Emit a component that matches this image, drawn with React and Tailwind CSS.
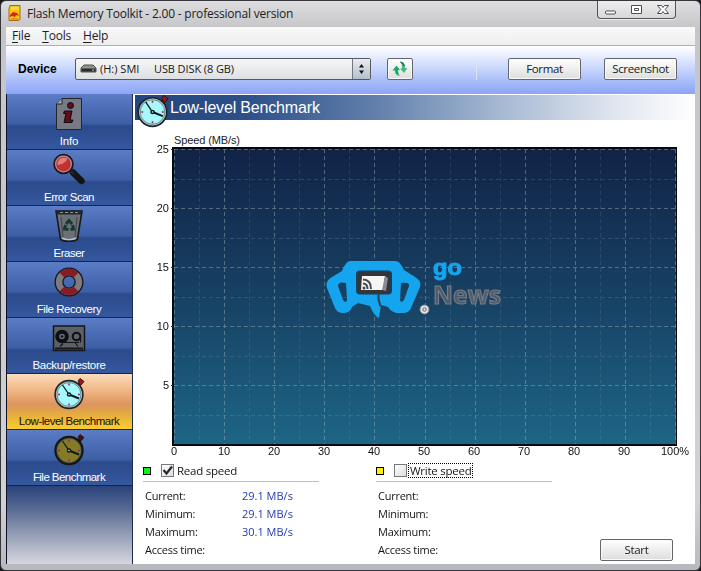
import React from "react";

const ui = "font-['Open_Sans','Noto_Sans',sans-serif]";
const arial = "font-['Liberation_Sans',Arial,sans-serif]";

function Stopwatch({ face = "#a5f8fb", rim = "#b9c3c6", line = "#17272b", crown = "#a7131d", size = 34, className = "" }) {
  return (
    <svg width={size} height={size} viewBox="0 0 34 34" className={className}>
      <path d="M25 9l3-2" stroke={line} strokeWidth="4" />
      <path d="M26 4l2-2.500 4 3-3.500 4z" fill={crown} stroke="#3d1416" strokeWidth="1" />
      <circle cx="17" cy="17.500" r="13.900" fill={rim} stroke={line} strokeWidth="1.600" />
      <circle cx="17" cy="17.500" r="11.900" fill={face} stroke="#52686c" strokeWidth=".7" />
      <path d="M17 6.500v2M17 26.500v2M6 17.500h2M26 17.500h2" stroke="#a32752" strokeWidth="1.500" />
      <path d="M17 17.500L10.500 8" stroke="#101c20" strokeWidth="1.300" />
      <path d="M17 17.500l10 4" stroke="#101c20" strokeWidth="2" />
      <circle cx="17" cy="17.500" r="2.200" fill="#101c20" />
      <circle cx="17" cy="17.500" r=".7" fill="#fff" />
    </svg>
  );
}

function InfoIcon() {
  return (
    <svg width="34" height="34" viewBox="0 0 34 34">
      <path d="M10 1.500H29.500V32.500H4.500V7z" fill="#777984" stroke="#23252d" />
      <path d="M4.500 7H10V1.500" fill="#a1a5b3" stroke="#23252d" />
      <circle cx="18.500" cy="8.500" r="3" fill="#5d101b" stroke="#15090d" />
      <path d="M12.500 14h7.500l-2 9h3l-1 2.500h-8l2-9h-2.500z" fill="#5d101b" stroke="#15090d" />
    </svg>
  );
}

function LensIcon() {
  return (
    <svg width="34" height="34" viewBox="0 0 34 34">
      <path d="M21 19.500L29.500 28" stroke="#141417" strokeWidth="6.500" strokeLinecap="round" />
      <path d="M16 15l6 6" stroke="#22222a" strokeWidth="3" />
      <circle cx="11.500" cy="11" r="9.300" fill="#c0312f" stroke="#24161d" strokeWidth="2" />
      <circle cx="11.500" cy="11" r="7.900" fill="none" stroke="#a9929a" strokeWidth="1.200" />
      <path d="M5.500 12c-.5-6 5-8.500 10-6.500-2 4-5 6-10 6.500z" fill="#e98a85" opacity=".85" />
    </svg>
  );
}

function BinIcon() {
  return (
    <svg width="34" height="34" viewBox="0 0 34 34">
      <path d="M4 2h26l-4.500 28c-2 3-15 3-17 0z" fill="#6b7078" stroke="#17191d" strokeWidth="1.600" />
      <path d="M4 1.500h26l-1 4H5z" fill="#24272d" />
      <path d="M8 3.500h18" stroke="#8c9098" strokeDasharray="3 2" />
      <path d="M9 8l2 21M25 8l-2 21" stroke="#454b55" strokeWidth="1.200" />
      <path d="M14 15l3-3.500 3 3.500M20.500 16l1 4-3 .5M13.500 16l-1 4 4 .5" fill="none" stroke="#173a2e" strokeWidth="3" />
      <path d="M10 29c4 2 10 2 14 0" fill="none" stroke="#bdc2ca" strokeWidth="1.500" />
    </svg>
  );
}

function RingIcon() {
  return (
    <svg width="34" height="34" viewBox="0 0 34 34">
      <circle cx="17" cy="17" r="10" fill="none" stroke="#15161c" strokeWidth="9" />
      <circle cx="17" cy="17" r="10" fill="none" stroke="#7d7b80" strokeWidth="6.400" />
      <path d="M9.930 9.930A10 10 0 0 1 24.070 9.930M24.070 24.070A10 10 0 0 1 9.930 24.070" fill="none" stroke="#871c24" strokeWidth="6.400" />
    </svg>
  );
}

function TapeIcon() {
  return (
    <svg width="34" height="34" viewBox="0 0 34 34">
      <path d="M1.500 5h31v24.500h-31z" fill="#5d6066" stroke="#15171c" strokeWidth="1.500" />
      <path d="M3 27.500h28" stroke="#15171c" strokeWidth="2" />
      <circle cx="10" cy="15.500" r="4.800" fill="#65717d" stroke="#0d0f12" strokeWidth="4" />
      <circle cx="24.500" cy="15.500" r="3.800" fill="#5b6269" stroke="#0d0f12" strokeWidth="2" />
      <path d="M10 21.500h17M28.500 16.500v5M8 25.500l3-3M23 21.500l3 4" fill="none" stroke="#111317" strokeWidth="1.200" />
      <circle cx="10" cy="15.500" r="1.300" fill="#0d0f12" />
    </svg>
  );
}

const items = [
  ["Info", <InfoIcon />, "tracking-[-0.2px]"],
  ["Error Scan", <LensIcon />, "tracking-[-0.5px]"],
  ["Eraser", <BinIcon />, "tracking-[-0.5px]"],
  ["File Recovery", <RingIcon />, "tracking-[-0.45px]"],
  ["Backup/restore", <TapeIcon />, "tracking-[-0.3px]"],
  ["Low-level Benchmark", <Stopwatch />, "tracking-[-0.5px]"],
  ["File Benchmark", <Stopwatch face="#857a25" rim="#29291e" line="#15150f" crown="#35151a" />, "tracking-[-0.55px]"],
];

function Sidebar() {
  return (
    <nav className="flex w-[127px] shrink-0 flex-col border-x border-l-[#0c1222] border-r-[#1d2b4d]">
      {items.map(([name, icon, tracking], i) => (
        <div
          key={name}
          className={`flex h-14 shrink-0 flex-col items-center border-b pr-px pt-[3px] text-[11.5px] leading-[14px] ${arial} ${tracking} ${
            i === 5
              ? "border-[#2c2a22] bg-[linear-gradient(#fbdcbb_0%,#eeb07c_35%,#dc9560_55%,#dfa04c_65%,#eab53a_80%,#fccd30_100%)] text-[#15120a]"
              : "border-[#172348] bg-[linear-gradient(#5a7dc6_0%,#4869b1_35%,#3d5fa6_54%,#2c4b8d_58%,#2f5094_78%,#36589f_100%)] text-white"
          }`}
        >
          {icon}
          <span className="mt-[3px] whitespace-nowrap">{name}</span>
        </div>
      ))}
      <div className="grow bg-[linear-gradient(#2a437a,#596b94_30%,#9aa2b9_65%,#d5d7df)]" />
    </nav>
  );
}

function WatchLogo() {
  return (
    <g>
      <path
        fill="#15a5ef"
        fillRule="evenodd"
        d="M350 261H395Q400 261 404 270L415 277Q422 281 420 287L411 308Q409 313 403 313H396Q391 312 388 307Q385 306 381 305L379 318Q374 316 370 306L358 303L352 307Q350 313 343 313Q337 313 335 308L327 288Q325 281 332 277L342 271Q346 261 350 261ZM346 283Q338 281 338 286L343 300Q346 304 347 300ZM401 283Q410 282 409 286L404 300Q401 304 400 300Z"
      />
      <rect x="356" y="270.500" width="36" height="24" rx="4" fill="#153f63" />
      <rect x="358" y="272" width="32.500" height="21" rx="3" fill="#33353b" />
      <path d="M362 276h23l-2 14h-22z" fill="#f5f6f4" />
      <path d="M385 276l3 2-2 13-4-1z" fill="#8b8c8d" />
      <path d="M363 279.500q8 0 8 9.500M363 283.500q4.500 0 4.500 5.500" fill="none" stroke="#434951" strokeWidth="2" />
      <circle cx="364" cy="288" r="1.500" fill="#434951" />
      <path d="M378.500 294v5l2 7.500" fill="none" stroke="#30445b" strokeWidth="2.200" />
      <circle cx="424.500" cy="309.500" r="4.500" fill="#e4e2e2" stroke="#878b91" strokeWidth="1" />
      <circle cx="424.500" cy="309.500" r="1.700" fill="none" stroke="#5d5d62" />
      <text x="433" y="275" textLength="29" lengthAdjust="spacingAndGlyphs" fontFamily="Liberation Sans" fontWeight="700" fontSize="22" fill="#15a5ef" stroke="#15a5ef" strokeWidth="1">go</text>
      <text x="433" y="303.500" textLength="68" lengthAdjust="spacingAndGlyphs" fontFamily="Open Sans" fontWeight="700" fontSize="25" fill="#4a5c72" stroke="#7b7b7d" strokeWidth="1.200">News</text>
    </g>
  );
}

const ten = [0, 1, 2, 3, 4, 5, 6, 7, 8, 9, 10];

function SpeedChart() {
  return (
    <svg width="560" height="328" viewBox="135 132 560 328" className="block shrink-0" fontFamily="Liberation Sans, Arial, sans-serif" fontSize="11">
      <defs>
        <linearGradient id="plot" x1="0" y1="0" x2="0" y2="1">
          <stop offset="0" stopColor="#112347" />
          <stop offset=".5" stopColor="#174163" />
          <stop offset="1" stopColor="#1d6586" />
        </linearGradient>
      </defs>
      <text x="174" y="144" textLength="66" fontSize="11" fill="#222">Speed (MB/s)</text>
      <rect x="172" y="147" width="505" height="299" fill="#000a0e" />
      <rect x="174" y="149" width="502" height="295" fill="url(#plot)" />
      <g stroke="#9cadb2" strokeDasharray="4 3" opacity=".6">
        {ten.map((n) => (
          <g key={n}>
            <path d={`M${Math.round(174 + n * 50.1) + 0.5} 149V444`} opacity=".8" />
            {n < 10 && <path d={`M${Math.round(199 + n * 50.1) + 0.5} 149V444`} opacity=".28" />}
            {n < 10 && <path d={`M174 ${Math.round(149 + n * 29.5) + 0.5}H676`} opacity={n % 2 ? 0.35 : 0.8} />}
          </g>
        ))}
      </g>
      <g fill="#111">
        {[25, 20, 15, 10, 5].map((n, i) => (
          <g key={n}>
            <text x="169" y={153 + i * 59} textAnchor="end">{n}</text>
            <path d={`M171 ${149.5 + i * 59}h3`} stroke="#222" />
          </g>
        ))}
        {ten.map((n) => (
          <text key={n} x={n === 10 ? 675 : 174 + n * 50} y="455" textAnchor="middle">{n === 10 ? "100%" : n * 10}</text>
        ))}
      </g>
      <WatchLogo />
    </svg>
  );
}

function Stats({ label, color, checked, values, focus }) {
  return (
    <section className={`w-[176px] ${ui} text-[11px] text-[#151515]`}>
      <div className="flex h-[22px] items-center border-b border-[#bdbdbd]">
        <i className={`block h-2 w-2 border border-black ${color}`} />
        <span className="ml-[10px] flex h-[13px] w-[13px] items-center justify-center border border-[#777] bg-[linear-gradient(135deg,#fff,#ddd)]">
          {checked && (
            <svg width="11" height="11" viewBox="0 0 11 11"><path d="M1.500 5l3 3.500L10 1.500" fill="none" stroke="#252832" strokeWidth="2.200" /></svg>
          )}
        </span>
        <span className={`ml-px flex h-[15px] items-center whitespace-nowrap border border-dotted px-px text-[11.5px] tracking-[-0.25px] ${focus ? "border-black" : "border-transparent"}`}>{label}</span>
      </div>
      <div className="flex flex-col pt-[5px]">
        {["Current:", "Minimum:", "Maximum:", "Access time:"].map((name, i) => (
          <div key={name} className="flex h-[18px] items-center pl-[2px]">
            <span className="w-[97px] whitespace-nowrap tracking-[-0.25px]">{name}</span>
            <span className="whitespace-nowrap text-[11px] text-[#213bb2]">{values[i]}</span>
          </div>
        ))}
      </div>
    </section>
  );
}

function Button({ children, className = "" }) {
  return (
    <button className={`flex h-[22px] items-center justify-center rounded-[2px] border border-[#63666b] bg-[linear-gradient(#fff,#eee_50%,#ddd)] text-[11.5px] tracking-[-0.35px] text-[#191919] shadow-[inset_0_0_0_1px_#fafafa] ${ui} ${className}`}>
      {children}
    </button>
  );
}

function TitleBar() {
  return (
    <header className="flex h-[26px] shrink-0 items-start pl-[7px]">
      <svg width="13" height="17" viewBox="0 0 13 17" className="mt-[4px]">
        <path d="M2 .5h10v14l-2 1H1V4z" fill="#f7c514" stroke="#a8661b" />
        <path d="M4 2v3M6 2v3M8 2v3M10 2v3" stroke="#ffe967" />
        <path d="M2 10l3-3 4 1 2 3-3-1-1 2-3-1-2 1z" fill="#d9221e" />
        <path d="M3 14h7" stroke="#df6b18" />
      </svg>
      <h1 className={`ml-[6px] mt-[4px] whitespace-nowrap text-[12px] leading-[17px] tracking-[-0.21px] text-[#202124] ${ui}`}>Flash Memory Toolkit - 2.00 - professional version</h1>
      <div className="ml-auto mr-[24px] flex h-[18px] w-[79px] items-center rounded-b-[4px] border border-t-0 border-[#505257] bg-[linear-gradient(#ededee,#d8d8d9)] shadow-[0_1px_0_#eee]">
        <svg width="77" height="17" viewBox="0 0 77 17" fill="#fff" stroke="#4c4e54">
          <rect x="7.500" y="10" width="10" height="3" rx="1" />
          <path d="M33.500 4.500h10v8h-10z" /><path d="M36.500 7.500h4v2h-4z" />
          <path d="M59.500 4.500h4l1.500 2 1.500-2h4l-3.300 4 3.300 4h-4l-1.500-2-1.500 2h-4l3.300-4z" />
        </svg>
      </div>
    </header>
  );
}

function Toolbar() {
  return (
    <div className="flex h-[48px] shrink-0 items-center bg-[linear-gradient(#fff_0%,#eef3ff_15%,#c5d4fc_50%,#a6baf9_75%,#8ca5f6_100%)] pb-[2px]">
      <b className={`w-[69px] pl-3 text-[12px] text-black ${arial}`}>Device</b>
      <div className={`flex h-[22px] w-[296px] items-center rounded-[2px] border border-[#55595e] bg-[linear-gradient(#f7f7f7,#dedfe1)] pl-[4px] text-[11px] text-[#171717] ${ui}`}>
        <svg width="17" height="10" viewBox="0 0 17 10">
          <path d="M4 1h9l3 3v4H1V4z" fill="#90938f" stroke="#4e504d" />
          <path d="M1.500 4.500h14v3h-14z" fill="#292c29" /><path d="M12 6h2" stroke="#b2d0ac" />
        </svg>
        <span className="ml-[3px] w-[54px] whitespace-nowrap">(H:) SMI</span>
        <span className="whitespace-nowrap tracking-[-0.1px]">USB DISK (8 GB)</span>
        <span className="ml-auto flex h-full w-[18px] items-center justify-center border-l border-[#6e7780] bg-[linear-gradient(#e9edf2,#b5bec8)]">
          <svg width="7" height="12" viewBox="0 0 7 12"><path d="M3.500 1L6 4.500H1zM3.500 11L1 7.500h5z" fill="#111" /></svg>
        </span>
      </div>
      <Button className="ml-4 w-[26px]">
        <svg width="18" height="18" viewBox="0 0 18 18">
          <path d="M1.500 10.500l4-5 3.500 4.500H7q0 3 1.500 6-4.500-1-4.500-5.500z" fill="#1ca968" />
          <path d="M9.500 2q4 0 4.500 6h2.500l-3.500 5-4-4.500h2Q11.500 5 9.500 2z" fill="#45b87b" />
          <path d="M9.500 2q3 1 4 4" fill="none" stroke="#176f6b" strokeWidth="1.500" />
        </svg>
      </Button>
      <i className="ml-[63px] h-[21px] w-px bg-[#dce4fa]" />
      <Button className="ml-[31px] w-[73px]">Format</Button>
      <Button className="ml-[23px] w-[73px]">Screenshot</Button>
    </div>
  );
}

export default function App() {
  return (
    <div className="h-[571px] w-[701px] overflow-hidden bg-[#17191e]">
      <div className="flex h-[571px] w-[701px] flex-col overflow-hidden rounded-[6px] border border-[#34363c] bg-[linear-gradient(#dedee0_0px,#c6c6c9_27px,#c8c8ca_200px,#d2d2d4_500px,#b5b7be_571px)]">
        <TitleBar />
        <div className="mx-[5px] flex h-[537px] flex-col">
          <div className={`flex h-[19px] shrink-0 items-center gap-[12px] border-b border-[#aeb0b4] bg-[linear-gradient(#fafafa,#ededee)] pl-[6px] text-[12px] tracking-[-0.2px] text-[#1d1d1d] ${ui}`}>
            {["File", "Tools", "Help"].map((m) => (
              <span key={m} className="leading-none"><span className="underline underline-offset-2">{m[0]}</span>{m.slice(1)}</span>
            ))}
          </div>
          <Toolbar />
          <div className="flex grow bg-white">
            <Sidebar />
            <main className="ml-[2px] flex w-[560px] flex-col pt-px">
              <div className="mb-3 flex h-[25px] shrink-0 items-center bg-[linear-gradient(90deg,#24457f_0%,#2d5089_20%,#5f7daa_42%,#a5b8d2_65%,#dce2ed_84%,#fff_100%)]">
                <Stopwatch size={35} className="mt-2 shrink-0" />
                <h2 className={`whitespace-nowrap text-[16px] tracking-[-0.17px] text-white ${arial}`}>Low-level Benchmark</h2>
              </div>
              <SpeedChart />
              <div className="flex h-[103px] shrink-0 pl-2">
                <Stats label="Read speed" color="bg-[#0df515]" checked values={["29.1 MB/s", "29.1 MB/s", "30.1 MB/s", ""]} />
                <div className="ml-[57px]"><Stats label="Write speed" color="bg-[#fff000]" focus values={["", "", "", ""]} /></div>
                <Button className="mb-[2px] ml-12 mt-auto w-[73px]">Start</Button>
              </div>
            </main>
          </div>
        </div>
      </div>
    </div>
  );
}
